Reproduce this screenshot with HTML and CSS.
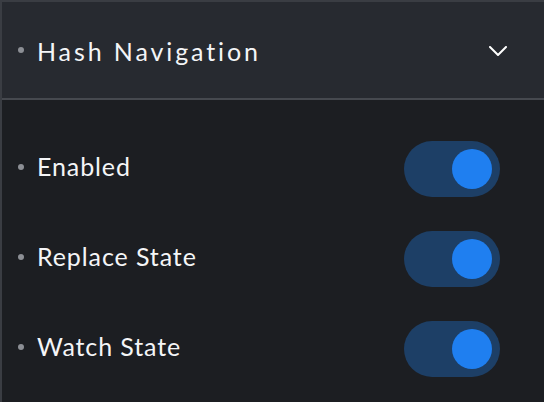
FILE: index.html
```
<!DOCTYPE html>
<html>
<head>
<meta charset="utf-8">
<link rel="stylesheet" href="styles.css">
</head>
<body>
<div class="panel">
  <div class="header">
    <span class="dot"></span>
    <span class="title">Hash Navigation</span>
    <svg class="chevron" width="18" height="10" viewBox="0 0 18 10"><path d="M1 1 L9 9 L17 1" fill="none" stroke="#ffffff" stroke-width="2" stroke-linecap="round" stroke-linejoin="round"/></svg>
  </div>
  <div class="body">
    <div class="row">
      <span class="dot"></span>
      <span class="label">Enabled</span>
      <span class="toggle"><span class="knob"></span></span>
    </div>
    <div class="row">
      <span class="dot"></span>
      <span class="label">Replace State</span>
      <span class="toggle"><span class="knob"></span></span>
    </div>
    <div class="row">
      <span class="dot"></span>
      <span class="label">Watch State</span>
      <span class="toggle"><span class="knob"></span></span>
    </div>
  </div>
</div>
</body>
</html>
```
FILE: styles.css
```
html, body {
  margin: 0;
  padding: 0;
  background: #1c1e22;
  font-family: Lato, "Noto Sans", sans-serif;
  color: #f4f5f7;
}
.panel {
  width: 544px;
  height: 402px;
  box-sizing: border-box;
  border-left: 2px solid #3a3d43;
  border-top: 2px solid #3a3d43;
  background: #1c1e22;
}
.header {
  height: 98px;
  box-sizing: border-box;
  background: #272a30;
  border-bottom: 2px solid #46494f;
  display: flex;
  align-items: center;
  padding-left: 16px;
  padding-right: 37px;
}
.dot {
  width: 6px;
  height: 6px;
  border-radius: 50%;
  background: #8c8f95;
  flex: none;
  margin-right: 13px;
}
.title {
  font-size: 25px;
  letter-spacing: 2.9px;
  flex: 1;
  margin-top: 1px;
}
.chevron {
  display: block;
  margin-top: 2px;
}
.body {
  padding-top: 24px;
}
.row {
  height: 90px;
  display: flex;
  align-items: center;
  padding-left: 16px;
  padding-right: 44px;
}
.row .dot {
  margin-top: -5px;
}
.label {
  flex: 1;
  font-size: 25px;
  letter-spacing: 0.9px;
  margin-top: -7px;
}
.toggle {
  width: 96px;
  height: 56px;
  border-radius: 28px;
  background: #1d3f66;
  display: flex;
  align-items: center;
  justify-content: flex-end;
  padding-right: 8px;
  box-sizing: border-box;
}
.knob {
  width: 40px;
  height: 40px;
  border-radius: 50%;
  background: #1f7ff0;
}
```
